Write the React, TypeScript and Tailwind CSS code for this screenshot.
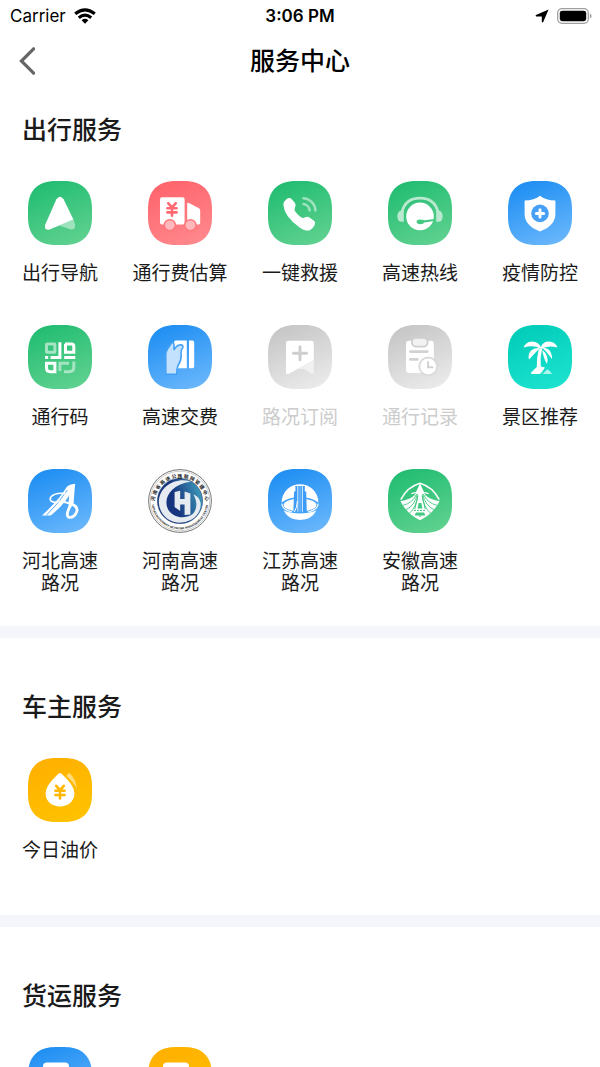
import type { ReactNode } from "react";

type Tone = "green" | "red" | "blue" | "gray" | "teal" | "amber";

const tones: Record<Tone, [string, string]> = {
  green: ["#22bd72", "#5fd18f"],
  red: ["#ff646c", "#ff888d"],
  blue: ["#1f8ff3", "#68b6fb"],
  gray: ["#c6c6c6", "#eaeaea"],
  teal: ["#02cdb9", "#1be2cf"],
  amber: ["#ffb000", "#ffc200"],
};

const FONT = "font-['Inter','Noto_Sans_CJK_SC',sans-serif]";

function Tile({ id, tone, children }: { id: string; tone: Tone; children: ReactNode }) {
  const [from, to] = tones[tone];
  return (
    <svg viewBox="0 0 64 64" className="w-16 h-16" aria-hidden="true">
      <defs>
        <linearGradient id={id} x1="0.3" y1="0" x2="0.7" y2="1">
          <stop offset="0" stopColor={from} />
          <stop offset="1" stopColor={to} />
        </linearGradient>
      </defs>
      <path
        d="M0 28C0 9.6 9.6 0 28 0H36C54.4 0 64 9.6 64 28V36C64 54.4 54.4 64 36 64H28C9.6 64 0 54.4 0 36Z"
        fill={`url(#${id})`}
      />
      {children}
    </svg>
  );
}

function Yen({ x, y, color }: { x: number; y: number; color: string }) {
  return (
    <path
      transform={`translate(${x} ${y})`}
      d="M-3.8-6.2 0-1.8 3.8-6.2M0-1.8V6.4M-4.6-1.2H4.6M-4.6 3H4.6"
      fill="none"
      stroke={color}
      strokeWidth="2.6"
      strokeLinecap="round"
    />
  );
}

function NavigationIcon() {
  return (
    <Tile id="nav" tone="green">
      <path d="M31 44.4 45.4 38.4 47 43.2Q48 48.2 43.6 48.4Q42 48.4 40.6 47.8Z" fill="#fff" opacity="0.45" />
      <path d="M28.4 18.2Q32 13.2 35.6 18.2L45.4 38.4 21.6 48.4Q16 50 17.2 43.8Z" fill="#fff" />
    </Tile>
  );
}

function TruckIcon() {
  return (
    <Tile id="truck" tone="red">
      <rect x="12" y="16.3" width="24.6" height="27.2" rx="2" fill="#fff" />
      <path d="M39.2 23.2Q39.2 21.2 41 22L51 27.2Q52.2 28 52.2 29.4V41.8Q52.2 43.4 50.6 43.4H39.2Z" fill="#fff" />
      <Yen x={24} y={28.4} color="#ff6a72" />
      <circle cx="21.8" cy="44.2" r="6.3" fill="#ff757b" />
      <circle cx="42.4" cy="44.2" r="6.3" fill="#ff787e" />
      <circle cx="21.8" cy="44.2" r="4.8" fill="#ffb9bc" />
      <circle cx="42.4" cy="44.2" r="4.8" fill="#ffb9bc" />
    </Tile>
  );
}

function PhoneIcon() {
  return (
    <Tile id="phone" tone="green">
      <path
        d="M15.4 22.6Q15.8 20.6 18.4 18.2Q21.4 15.6 23.8 18.2L26.8 21.8Q28.6 24.2 27 26.6Q25.8 28.6 27.6 31Q29.8 34 33 36.2Q35 37.6 36.8 36.6Q39.4 35 41.8 36.8L46 39.8Q48 41.6 46.4 44.4Q43.6 49 40.2 49.6Q36.8 49.8 31.6 46.4Q24.4 41.8 20 35.6Q15.2 28.4 15.4 22.6Z"
        fill="#fff"
      />
      <g fill="none" stroke="#fff" strokeWidth="2.5" strokeLinecap="round" opacity="0.5">
        <path d="M35.4 17.2A12.6 12.6 0 0 1 47.4 29.6" />
        <path d="M35.4 23A7 7 0 0 1 41.6 29.4" />
      </g>
    </Tile>
  );
}

function HotlineIcon() {
  return (
    <Tile id="hotline" tone="green">
      <g fill="#b9e9ce">
        <path d="M14 31C16.4 21.6 23.4 17.2 32 17.2S47.6 21.6 50 31" fill="none" stroke="#b9e9ce" strokeWidth="2.8" />
        <path d="M15.8 29.6V40.8H13.6Q9.4 40.8 9.4 35.4 9.4 30 13.6 29.6ZM48.2 29.6V40.8H50.4Q54.6 40.8 54.6 35.4 54.6 30 50.4 29.6Z" />
      </g>
      <circle cx="32" cy="35.4" r="13.8" fill="#fff" />
      <ellipse cx="32.4" cy="40.8" rx="3.8" ry="2.4" fill="#45c982" />
      <path d="M32 39.8 47 38 46 40 33 42Z" fill="#45c982" />
    </Tile>
  );
}

function ShieldIcon() {
  return (
    <Tile id="shield" tone="blue">
      <path d="M32 14.8Q37.8 19.6 47.4 19.6V33Q47.4 44.6 32 50.4Q16.6 44.6 16.6 33V19.6Q26.2 19.6 32 14.8Z" fill="#fff" />
      <circle cx="32" cy="32.4" r="8.8" fill="#489ff6" />
      <path d="M32 28.8V36M28.4 32.4H35.6" stroke="#fff" strokeWidth="3" strokeLinecap="round" />
    </Tile>
  );
}

function QrIcon() {
  return (
    <Tile id="qr" tone="green">
      <g fill="none" stroke="#fff" strokeWidth="3">
        <rect x="18.5" y="18.9" width="8.4" height="8.4" rx="0.6" opacity="0.55" />
        <path d="M36.9 18.9H43.5Q45.8 18.9 45.8 21.2V27.3H37.5V18.9Z" />
        <path d="M18.5 38.3H26.9V46.7H22.2Q18.5 46.7 18.5 43Z" />
        <path d="M31.9 17.2V32.6H22.6M17 32.6H20.2M36.2 32.6H47.3" />
        <g opacity="0.5">
          <path d="M31.9 46V38.3H41" />
          <path d="M45.8 36.6V42Q45.8 46.7 41 46.7H36" />
        </g>
      </g>
    </Tile>
  );
}

function CardIcon() {
  return (
    <Tile id="card" tone="blue">
      <path d="M26 17.4Q26 15.6 27.8 15.6H38.8V43.2H26Z" fill="#fff" />
      <path d="M41 15.6H44.4Q46.2 15.6 46.2 17.4V41.4Q46.2 43.2 44.4 43.2H41Z" fill="#fff" />
      <path
        d="M17.8 49.2V30Q17.6 26.6 20 23.4L23.4 18.4Q25.2 16.4 26 19.2V25Q28 20.4 32.6 19.8Q35.6 19.8 34.8 22.8Q32.6 25 33.2 30Q33.4 35.6 30 40.6Q28.6 44 28.6 49.2Z"
        fill="#c3e1fd"
        stroke="#419ff6"
        strokeWidth="1.5"
      />
    </Tile>
  );
}

function BookmarkIcon() {
  return (
    <Tile id="bookmark" tone="gray">
      <path d="M30 44 45.8 35V47Q45.6 49.4 43.4 48.4L36.6 44Z" fill="#f1f1f1" />
      <path d="M18 18.4Q18 15.8 20.6 15.8H43.2Q45.8 15.8 45.8 18.4V35L21 48.8Q18 50 18 47Z" fill="#fff" />
      <path d="M32 21.8V34.8M25.4 28.3H38.6" stroke="#cecece" strokeWidth="3" strokeLinecap="round" />
    </Tile>
  );
}

function RecordIcon() {
  return (
    <Tile id="record" tone="gray">
      <rect x="18" y="15.8" width="27.8" height="32.2" rx="3" fill="#fff" />
      <rect x="24" y="12.8" width="15.6" height="8.8" rx="4" fill="#f2f2f2" stroke="#cecece" strokeWidth="1.8" />
      <path d="M22.4 26.6H39.4M22.4 34.4H29.4" stroke="#d2d2d2" strokeWidth="2.6" strokeLinecap="round" />
      <circle cx="40.2" cy="41.4" r="9.8" fill="#d9d9d9" />
      <circle cx="40.2" cy="41.4" r="8" fill="#fff" />
      <path d="M40 37V42.2H44.4" fill="none" stroke="#d2d2d2" strokeWidth="2" strokeLinecap="round" />
    </Tile>
  );
}

function PalmIcon() {
  return (
    <Tile id="palm" tone="teal">
      <path d="M34.6 49 38.8 44.8Q39.8 44 40.8 45L44.2 49Z" fill="#fff" opacity="0.65" />
      <g fill="#fff">
        <path d="M30.8 24H34Q32 33 32.8 41.6L37 42.4 33.6 47.6Q32.6 49 31 49H24Q22 48.6 23.6 47L28.8 42Q28.4 33 30.8 24Z" />
        <path d="M32 23.6Q26 19.6 15.6 22.6Q17.6 16.6 24 16.4Q30.6 16.6 32.8 22Q35.6 16.4 41 16.6Q47.6 17.2 49.4 22.6Q39.6 19.8 33.6 24Z" />
        <path d="M32 23Q27 28 21 34.6Q19.4 28.8 23.4 25.2Q26.6 22.6 32 23Z" />
        <path d="M34.4 22.8Q43.8 22.6 44.2 34.2Q40 28.4 34.4 22.8Z" />
        <path d="M34.2 24.8Q41.4 30.6 39 39Q35.6 34 34.2 24.8Z" />
      </g>
    </Tile>
  );
}

function HebeiIcon() {
  return (
    <Tile id="hebei" tone="blue">
      <path d="M14 46.4Q31 31 38.4 18.6Q40.4 15.2 47.4 14.8Q46 18 44.4 21.4Q36 36 22.8 46.4Z" fill="#fff" />
      <path d="M18.6 46Q31 34 39.4 21" fill="none" stroke="#46a2f7" strokeWidth="0.9" />
      <path d="M41.6 18 47 15.4 45.4 36.4 40.4 38.4Z" fill="#fff" />
      <g fill="none" stroke="#fff" strokeLinecap="round">
        <path d="M29 33.6Q20.6 33.4 22.6 28.4Q26 23.4 37 24.4" strokeWidth="1.6" />
        <path d="M42.4 34.8Q50.2 36.8 48.8 42.4Q46.4 48.8 41.2 48.4Q36.8 46.6 42.4 36.8" strokeWidth="2.8" />
        <path d="M31 32.6Q37 32.8 44 35" strokeWidth="2" />
      </g>
    </Tile>
  );
}

function HenanLogo() {
  return (
    <svg viewBox="0 0 64 64" className="w-16 h-16" aria-hidden="true">
      <defs>
        <linearGradient id="henan" x1="0" y1="0.6" x2="1" y2="0.3">
          <stop offset="0.4" stopColor="#17357e" />
          <stop offset="1" stopColor="#3f9fbe" />
        </linearGradient>
        <path id="henan-top" d="M6.6 34A25.4 25.4 0 0 1 57.4 34" />
        <path id="henan-bottom" d="M3.6 32A28.4 28.4 0 0 0 60.4 32" />
      </defs>
      <circle cx="32" cy="32" r="31.4" fill="#fff" stroke="#555" strokeWidth="0.8" />
      <circle cx="32" cy="32" r="29.8" fill="none" stroke="#999" strokeWidth="0.5" />
      <circle cx="32" cy="32" r="22.6" fill="url(#henan)" stroke="#26406f" strokeWidth="0.6" />
      <path
        d="M43 12.4C28 7.6 10.4 17 10.8 34C12 47.6 23 54.6 34 53.6C46 52 53.4 44 52.6 34C51.6 29.4 49 27 45.4 25.6C49.6 32.4 49.6 40.6 44 45.6C37 50 26 49.4 20.4 41C14.4 30 22 15.6 43 12.4Z"
        fill="#e6eaf1"
      />
      <path d="M26.6 23 32.2 21.8V30H36.6V22.4L42.4 24.4V45.4L36.6 46V35.4H32.2V42L26.6 38Z" fill="#e6eaf1" />
      <text fontSize="4.8" fontWeight="700" fill="#222" textAnchor="middle" className="font-['Noto_Sans_CJK_SC',sans-serif]">
        <textPath href="#henan-top" startOffset="50%">河 南 省 高 速 公 路 联 网 管 理 中 心</textPath>
      </text>
      <text fontSize="3" fontWeight="700" fill="#222" textAnchor="middle" className="font-['Liberation_Sans',sans-serif]">
        <textPath href="#henan-bottom" startOffset="50%">HENAN MOTORWAY NETWORK MANAGEMENT CENTER</textPath>
      </text>
    </svg>
  );
}

function JiangsuIcon() {
  return (
    <Tile id="jiangsu" tone="blue">
      <path d="M13.6 33.6A18.4 18.4 0 0 1 50.4 33.6Q44 28.2 32 28.2T13.6 33.6Z" fill="#fff" />
      <path d="M15.6 41.6Q23 44.6 32 44.6T48.4 41.6Q43.6 51 32 51T15.6 41.6Z" fill="#fff" />
      <ellipse cx="32" cy="36" rx="16.4" ry="6.4" fill="#fff" />
      <path d="M13.8 34.6Q14.4 40.8 24 43M50.2 34.6Q49.6 40.8 40 43" fill="none" stroke="#fff" strokeWidth="1.1" />
      <path d="M27.4 17H36.8V22.4H38.2L38.8 43.4H25.4L26 22.4H27.4Z" fill="#3d9cf5" />
      <path d="M29.8 17V42.8M34.4 17V42.8" stroke="#fff" strokeWidth="0.8" />
      <path d="M32.1 17V42.8" stroke="#b4d9fc" strokeWidth="0.6" />
      <path d="M29.4 32Q29 39 26.4 43" fill="none" stroke="#fff" strokeWidth="1" />
    </Tile>
  );
}

function AnhuiIcon() {
  return (
    <Tile id="anhui" tone="green">
      <path d="M12.8 30.6Q19 18 32 14.2Q45 18 51.2 30.6" fill="none" stroke="#fff" strokeWidth="1.5" />
      <path d="M28.6 23.6Q24 31 12.4 32.2Q19 45 32 51.2Q45 45 51.6 32.2Q40 31 35.4 23.6Z" fill="#fff" />
      <path
        d="M28.6 25Q25 34 14.8 36.4M29.4 25Q26.6 37 18 40.6M30 26Q28 39 21.6 44M35.4 25Q39 34 49.2 36.4M34.6 25Q37.4 37 46 40.6M34 26Q36 39 42.4 44"
        fill="none"
        stroke="#42c880"
        strokeWidth="0.9"
      />
      <path d="M32 14.4 36 23H28Z" fill="#fff" />
      <path d="M23.4 24.6Q32 22 40.6 24.6" fill="none" stroke="#fff" strokeWidth="1.2" />
      <path d="M30.4 26.6H33.6L33.2 38H30.8Z" fill="#fff" />
      <path d="M29.8 27 26.8 40M34.2 27 37.2 40" stroke="#42c880" strokeWidth="1" />
      <path d="M30.6 34H33.4L34.4 39.6H29.6Z" fill="#42c880" />
      <path d="M26 41.4H38" stroke="#42c880" strokeWidth="1" strokeDasharray="2 1" />
      <path d="M28 43.6H36L37.4 46.4H26.6Z" fill="#42c880" />
      <path d="M30.2 46.4H33.8L32 48Z" fill="#42c880" />
    </Tile>
  );
}

function OilIcon() {
  return (
    <Tile id="oil" tone="amber">
      <path d="M38.4 18 41.2 14.8Q48.2 21.4 48.8 30.6Q46 24.4 38.4 18Z" fill="#fff" opacity="0.5" />
      <path d="M32 15Q33 15 34.4 16.6Q46.4 27.8 46.4 35.2C46.4 43.4 40 48.4 32 48.4S17.6 43.4 17.6 35.2Q17.6 27.8 29.6 16.6Q31 15 32 15Z" fill="#fff" />
      <Yen x={32} y={34} color="#ffb700" />
    </Tile>
  );
}

function FreightIcon({ id, tone }: { id: string; tone: Tone }) {
  return (
    <Tile id={id} tone={tone}>
      <rect x="15" y="15.4" width="26" height="32" rx="4" fill="#fff" />
      <path d="M22 26H34M22 33H30" stroke={tones[tone][0]} strokeWidth="3" strokeLinecap="round" />
    </Tile>
  );
}

type Service = { name: string; lines?: string[]; icon: ReactNode; disabled?: boolean };

const sections: { title: string; items: Service[] }[] = [
  {
    title: "出行服务",
    items: [
      { name: "出行导航", icon: <NavigationIcon /> },
      { name: "通行费估算", icon: <TruckIcon /> },
      { name: "一键救援", icon: <PhoneIcon /> },
      { name: "高速热线", icon: <HotlineIcon /> },
      { name: "疫情防控", icon: <ShieldIcon /> },
      { name: "通行码", icon: <QrIcon /> },
      { name: "高速交费", icon: <CardIcon /> },
      { name: "路况订阅", icon: <BookmarkIcon />, disabled: true },
      { name: "通行记录", icon: <RecordIcon />, disabled: true },
      { name: "景区推荐", icon: <PalmIcon /> },
      { name: "河北高速路况", lines: ["河北高速", "路况"], icon: <HebeiIcon /> },
      { name: "河南高速路况", lines: ["河南高速", "路况"], icon: <HenanLogo /> },
      { name: "江苏高速路况", lines: ["江苏高速", "路况"], icon: <JiangsuIcon /> },
      { name: "安徽高速路况", lines: ["安徽高速", "路况"], icon: <AnhuiIcon /> },
    ],
  },
  {
    title: "车主服务",
    items: [{ name: "今日油价", icon: <OilIcon /> }],
  },
  {
    title: "货运服务",
    items: [
      { name: "货车导航", lines: [], icon: <FreightIcon id="freight-a" tone="blue" /> },
      { name: "货运信息", lines: [], icon: <FreightIcon id="freight-b" tone="amber" /> },
    ],
  },
];

function StatusBar() {
  return (
    <div className="grid grid-cols-3 items-center h-8 px-2.5 text-[17px] leading-8 text-black">
      <div className="flex items-center gap-2">
        <span>Carrier</span>
        <svg viewBox="0 0 22 16" className="w-[22px] h-4" aria-hidden="true">
          <g fill="none" stroke="#000" strokeWidth="3.1">
            <path d="M1.2 5.8Q11-2.2 20.8 5.8" />
            <path d="M4.8 9.8Q11 4.6 17.2 9.8" />
          </g>
          <path d="M7.6 12.2Q11 9.4 14.4 12.2L11 15.8Z" fill="#000" />
        </svg>
      </div>
      <span className="text-center font-semibold">3:06 PM</span>
      <div className="flex items-center justify-end gap-2 -mr-0.5">
        <svg viewBox="0 0 14 14" className="w-3.5 h-3.5" aria-hidden="true">
          <path d="M13.6.5 8.2 13Q7.2 14 6.8 12.8V7.6L1.2 7.4Q0 7 1 6Z" fill="#000" />
        </svg>
        <svg viewBox="0 0 35 16" className="w-[35px] h-4" aria-hidden="true">
          <rect x="0.7" y="0.7" width="30.6" height="14.6" rx="4.2" fill="none" stroke="#a0a0a0" strokeWidth="1.3" />
          <rect x="2.8" y="2.8" width="26.4" height="10.4" rx="2.4" fill="#000" />
          <path d="M32.8 5.4Q34.6 6.2 34.6 8T32.8 10.6Z" fill="#a0a0a0" />
        </svg>
      </div>
    </div>
  );
}

function ServiceItem({ item }: { item: Service }) {
  return (
    <button
      type="button"
      aria-label={item.name}
      disabled={item.disabled}
      className={`flex flex-col items-center justify-start h-36 text-[19px] leading-[22px] ${
        item.disabled ? "text-[#cccccc]" : "text-[#1a1a1a]"
      }`}
    >
      {item.icon}
      <span className="mt-[18px] whitespace-nowrap">
        {(item.lines ?? [item.name]).map((line) => (
          <span key={line} className="block">
            {line}
          </span>
        ))}
      </span>
    </button>
  );
}

export default function App() {
  return (
    <div className={`flex flex-col h-screen overflow-hidden bg-white ${FONT}`}>
      <StatusBar />

      {/* Title bar */}
      <header className="grid grid-cols-[60px_1fr_60px] items-center h-[58px]">
        <button type="button" aria-label="返回" className="flex items-center h-full pl-[18px]">
          <svg viewBox="0 0 20 30" className="w-5 h-[30px]" aria-hidden="true">
            <path d="M15.6 2.8 3.4 15 15.6 27.2" fill="none" stroke="#666" strokeWidth="3.2" strokeLinecap="round" />
          </svg>
        </button>
        <h1 className="text-center text-[25px] leading-9 font-medium text-black">服务中心</h1>
      </header>

      <main className="flex-1 min-h-0 overflow-y-auto [scrollbar-width:none]">
        {sections.map((section, index) => (
          <section
            key={section.title}
            className={`pb-[13px] ${index === 0 ? "pt-[22px]" : "pt-[51px] border-t-12 border-[#f4f6fb]"}`}
          >
            <h2 className="px-[22px] mb-[33px] text-[25px] leading-9 font-medium text-[#1a1a1a]">{section.title}</h2>
            <div className="grid grid-cols-5">
              {section.items.map((item) => (
                <ServiceItem key={item.name} item={item} />
              ))}
            </div>
          </section>
        ))}
      </main>
    </div>
  );
}
